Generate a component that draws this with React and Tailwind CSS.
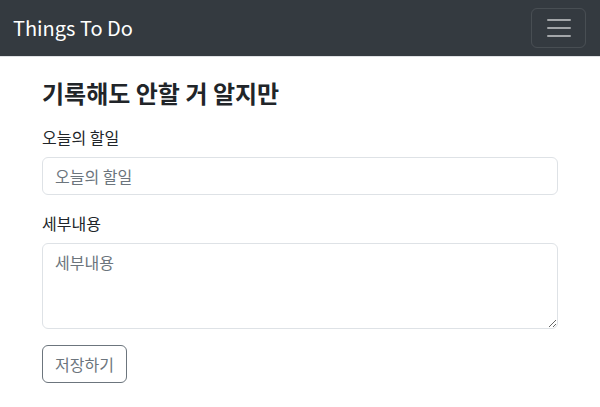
export default function App() {
  return (
    <div
      className="min-h-screen bg-white text-[#212529]"
      style={{ fontFamily: "'Noto Sans CJK KR', 'Noto Sans', sans-serif" }}
    >
      {/* ── Navbar ── */}
      <nav className="flex h-[57px] items-center justify-between border-b border-[#dfe1e4] bg-[#343a40] pl-[13px] pr-[14px]">
        <span className="text-[20px] leading-[30px] text-white">Things To Do</span>
        <button className="flex h-[40px] w-[55px] items-center justify-center rounded-[6px] border border-white/10">
          <svg width="30" height="30" viewBox="0 0 30 30">
            <path
              d="M4 7h22M4 15h22M4 23h22"
              stroke="rgba(255,255,255,0.55)"
              strokeWidth="2"
              strokeLinecap="round"
            />
          </svg>
        </button>
      </nav>

      {/* ── Form ── */}
      <main className="mx-auto max-w-[540px] px-3 pt-[21px]">
        <h3 className="mb-[18px] text-[24px] font-bold leading-[29px]">기록해도 안할 거 알지만</h3>

        <label className="mb-2 block text-[16px] leading-[24px]">오늘의 할일</label>
        <input
          className="mb-4 block h-[38px] w-full rounded-[6px] border border-[#dee2e6] px-3 text-[16px] outline-none placeholder:text-[#6c757d]"
          placeholder="오늘의 할일"
        />

        <label className="mb-2 block text-[16px] leading-[24px]">세부내용</label>
        <textarea
          className="mb-4 block h-[86px] w-full rounded-[6px] border border-[#dee2e6] px-3 py-[6px] text-[16px] leading-[24px] outline-none placeholder:text-[#6c757d]"
          placeholder="세부내용"
        />

        <button className="h-[38px] rounded-[6px] border border-[#6c757d] px-3 text-[16px] text-[#6c757d]">
          저장하기
        </button>
      </main>
    </div>
  );
}
